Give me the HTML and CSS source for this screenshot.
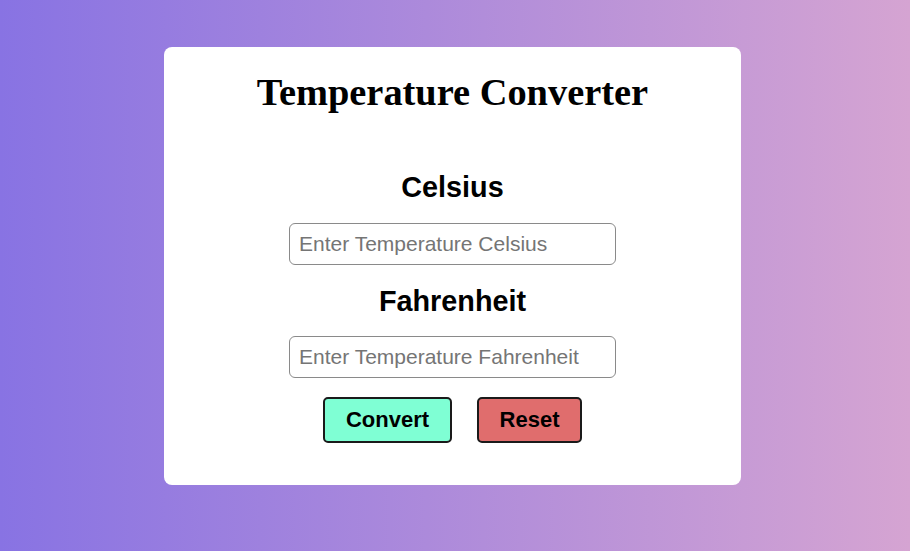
FILE: index.html
```html
<!DOCTYPE html>
<html>
<head>
<meta charset="utf-8">
<link rel="stylesheet" href="styles.css">
</head>
<body>
<main class="page">
  <section class="card">
    <h1 class="title">Temperature Converter</h1>
    <h2 class="label label-first">Celsius</h2>
    <input class="field" type="text" placeholder="Enter Temperature Celsius">
    <h2 class="label">Fahrenheit</h2>
    <input class="field" type="text" placeholder="Enter Temperature Fahrenheit">
    <div class="actions">
      <button class="btn btn-convert">Convert</button>
      <button class="btn btn-reset">Reset</button>
    </div>
  </section>
</main>
</body>
</html>
```
FILE: styles.css
```css
html, body {
  margin: 0;
  padding: 0;
  height: 100%;
}
body {
  background: linear-gradient(to right, #8873e3, #d5a4d2);
  font-family: "Liberation Sans", Arial, sans-serif;
}
.page {
  display: flex;
  justify-content: center;
  align-items: flex-start;
  padding: 47px 5px 0 0;
  box-sizing: border-box;
  height: 100%;
}
.card {
  width: 577px;
  box-sizing: border-box;
  background: #fff;
  border-radius: 8px;
  padding: 22px 0 42px;
  display: flex;
  flex-direction: column;
  align-items: center;
}
.title {
  margin: 0;
  font-family: "Liberation Serif", "Times New Roman", serif;
  font-weight: bold;
  font-size: 38.4px;
  line-height: 46px;
  color: #000;
}
.label {
  margin: 19px 0 18px;
  font-size: 28.8px;
  line-height: 34px;
  font-weight: bold;
  color: #000;
}
.label-first {
  margin: 55px 0 19px;
}
.field {
  width: 327px;
  height: 42px;
  box-sizing: border-box;
  border: 1px solid #8a8a8a;
  border-radius: 6px;
  padding: 0 9px;
  font-family: "Liberation Sans", Arial, sans-serif;
  font-size: 21px;
  color: #000;
  outline: none;
}
.field::placeholder {
  color: #757575;
}
.actions {
  display: flex;
  gap: 25px;
  margin-top: 19px;
}
.btn {
  height: 46px;
  box-sizing: border-box;
  border: 2px solid #1a1a1a;
  border-radius: 5px;
  padding: 0 20px;
  font-family: "Liberation Sans", Arial, sans-serif;
  font-weight: bold;
  font-size: 22px;
  line-height: 26px;
  color: #000;
  cursor: pointer;
}
.btn-convert {
  background: #7fffd4;
  width: 129px;
}
.btn-reset {
  background: #e06d6d;
  width: 105px;
}
```
